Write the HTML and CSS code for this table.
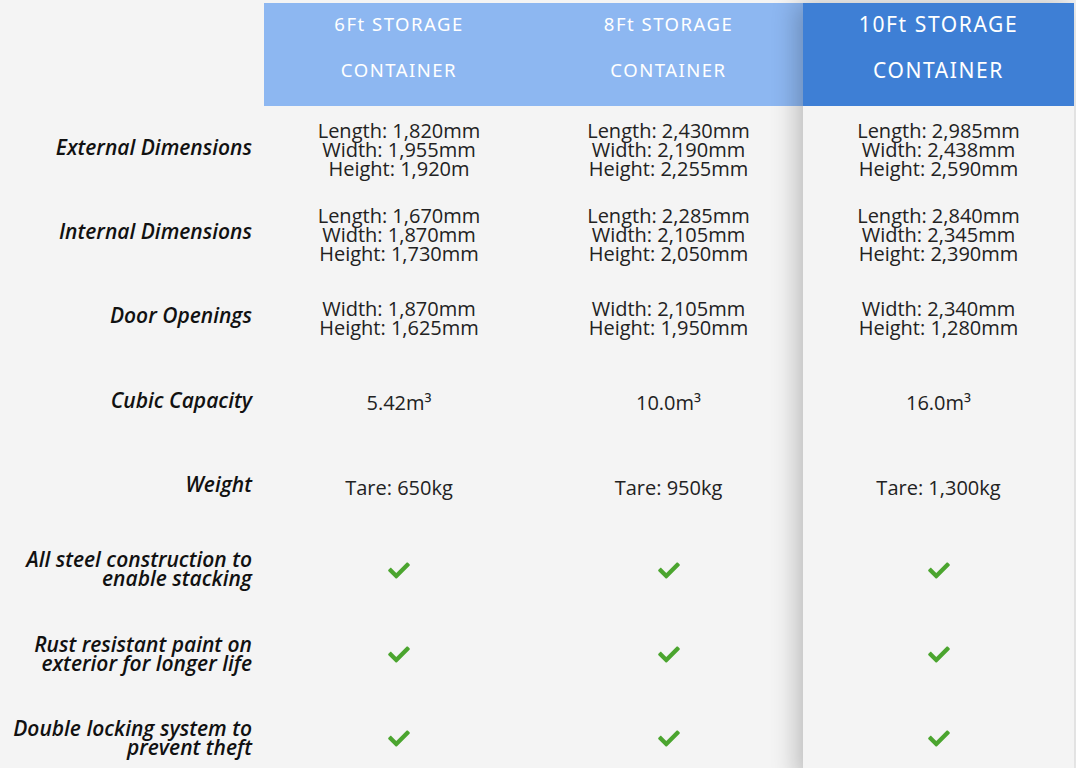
FILE: index.html
```html
<!DOCTYPE html>
<html lang="en">
<head>
<meta charset="utf-8">
<title>Storage Container Comparison</title>
<link rel="stylesheet" href="styles.css">
</head>
<body>
<div class="compare">
  <div class="col labels">
    <div class="head"></div>
    <div class="cell label">External Dimensions</div>
    <div class="cell label">Internal Dimensions</div>
    <div class="cell label">Door Openings</div>
    <div class="cell label">Cubic Capacity</div>
    <div class="cell label">Weight</div>
    <div class="cell label">All steel construction to<br>enable stacking</div>
    <div class="cell label">Rust resistant paint on<br>exterior for longer life</div>
    <div class="cell label">Double locking system to<br>prevent theft</div>
  </div>
  <div class="col plan">
    <div class="head"><p class="head-text">6Ft STORAGE<br>CONTAINER</p></div>
    <div class="cell">Length: 1,820mm<br>Width: 1,955mm<br>Height: 1,920m</div>
    <div class="cell">Length: 1,670mm<br>Width: 1,870mm<br>Height: 1,730mm</div>
    <div class="cell">Width: 1,870mm<br>Height: 1,625mm</div>
    <div class="cell">5.42m³</div>
    <div class="cell">Tare: 650kg</div>
    <div class="cell"><svg class="check" viewBox="0 0 512 400"><path d="M173.9 383.4l-166.4-166.4c-10-10-10-26.2 0-36.2l36.2-36.2c10-10 26.2-10 36.2 0L192 256.7 432.1 16.6c10-10 26.2-10 36.2 0l36.2 36.2c10 10 10 26.2 0 36.2l-294.4 294.4c-10 10-26.2 10-36.2 0z"/></svg></div>
    <div class="cell"><svg class="check" viewBox="0 0 512 400"><path d="M173.9 383.4l-166.4-166.4c-10-10-10-26.2 0-36.2l36.2-36.2c10-10 26.2-10 36.2 0L192 256.7 432.1 16.6c10-10 26.2-10 36.2 0l36.2 36.2c10 10 10 26.2 0 36.2l-294.4 294.4c-10 10-26.2 10-36.2 0z"/></svg></div>
    <div class="cell"><svg class="check" viewBox="0 0 512 400"><path d="M173.9 383.4l-166.4-166.4c-10-10-10-26.2 0-36.2l36.2-36.2c10-10 26.2-10 36.2 0L192 256.7 432.1 16.6c10-10 26.2-10 36.2 0l36.2 36.2c10 10 10 26.2 0 36.2l-294.4 294.4c-10 10-26.2 10-36.2 0z"/></svg></div>
  </div>
  <div class="col plan">
    <div class="head"><p class="head-text">8Ft STORAGE<br>CONTAINER</p></div>
    <div class="cell">Length: 2,430mm<br>Width: 2,190mm<br>Height: 2,255mm</div>
    <div class="cell">Length: 2,285mm<br>Width: 2,105mm<br>Height: 2,050mm</div>
    <div class="cell">Width: 2,105mm<br>Height: 1,950mm</div>
    <div class="cell">10.0m³</div>
    <div class="cell">Tare: 950kg</div>
    <div class="cell"><svg class="check" viewBox="0 0 512 400"><path d="M173.9 383.4l-166.4-166.4c-10-10-10-26.2 0-36.2l36.2-36.2c10-10 26.2-10 36.2 0L192 256.7 432.1 16.6c10-10 26.2-10 36.2 0l36.2 36.2c10 10 10 26.2 0 36.2l-294.4 294.4c-10 10-26.2 10-36.2 0z"/></svg></div>
    <div class="cell"><svg class="check" viewBox="0 0 512 400"><path d="M173.9 383.4l-166.4-166.4c-10-10-10-26.2 0-36.2l36.2-36.2c10-10 26.2-10 36.2 0L192 256.7 432.1 16.6c10-10 26.2-10 36.2 0l36.2 36.2c10 10 10 26.2 0 36.2l-294.4 294.4c-10 10-26.2 10-36.2 0z"/></svg></div>
    <div class="cell"><svg class="check" viewBox="0 0 512 400"><path d="M173.9 383.4l-166.4-166.4c-10-10-10-26.2 0-36.2l36.2-36.2c10-10 26.2-10 36.2 0L192 256.7 432.1 16.6c10-10 26.2-10 36.2 0l36.2 36.2c10 10 10 26.2 0 36.2l-294.4 294.4c-10 10-26.2 10-36.2 0z"/></svg></div>
  </div>
  <div class="col plan featured">
    <div class="head"><p class="head-text">10Ft STORAGE<br>CONTAINER</p></div>
    <div class="cell">Length: 2,985mm<br>Width: 2,438mm<br>Height: 2,590mm</div>
    <div class="cell">Length: 2,840mm<br>Width: 2,345mm<br>Height: 2,390mm</div>
    <div class="cell">Width: 2,340mm<br>Height: 1,280mm</div>
    <div class="cell">16.0m³</div>
    <div class="cell">Tare: 1,300kg</div>
    <div class="cell"><svg class="check" viewBox="0 0 512 400"><path d="M173.9 383.4l-166.4-166.4c-10-10-10-26.2 0-36.2l36.2-36.2c10-10 26.2-10 36.2 0L192 256.7 432.1 16.6c10-10 26.2-10 36.2 0l36.2 36.2c10 10 10 26.2 0 36.2l-294.4 294.4c-10 10-26.2 10-36.2 0z"/></svg></div>
    <div class="cell"><svg class="check" viewBox="0 0 512 400"><path d="M173.9 383.4l-166.4-166.4c-10-10-10-26.2 0-36.2l36.2-36.2c10-10 26.2-10 36.2 0L192 256.7 432.1 16.6c10-10 26.2-10 36.2 0l36.2 36.2c10 10 10 26.2 0 36.2l-294.4 294.4c-10 10-26.2 10-36.2 0z"/></svg></div>
    <div class="cell"><svg class="check" viewBox="0 0 512 400"><path d="M173.9 383.4l-166.4-166.4c-10-10-10-26.2 0-36.2l36.2-36.2c10-10 26.2-10 36.2 0L192 256.7 432.1 16.6c10-10 26.2-10 36.2 0l36.2 36.2c10 10 10 26.2 0 36.2l-294.4 294.4c-10 10-26.2 10-36.2 0z"/></svg></div>
  </div>
</div>
</body>
</html>
```

FILE: styles.css
```css
html, body {
  margin: 0;
  padding: 0;
  background: #f4f4f4;
}

body {
  padding-top: 3px;
  overflow: hidden;
  height: 765px;
  font-family: "Open Sans", "Liberation Sans", sans-serif;
  color: #222;
}

.compare {
  display: flex;
  width: 1074px;
  background: #f4f4f4;
}

.col {
  display: flex;
  flex-direction: column;
}

.labels {
  width: 264px;
}

.plan {
  width: 270px;
  background: #f4f4f4;
}

.plan:nth-child(3) {
  width: 269px;
}

.featured {
  width: 271px;
  position: relative;
  z-index: 1;
  box-shadow: -6px 0 24px rgba(0, 0, 0, 0.24);
}

.head {
  height: 103px;
  text-align: center;
  font-family: "Noto Sans", "DejaVu Sans", sans-serif;
  font-size: 18.5px;
  line-height: 46px;
  letter-spacing: 1.5px;
  color: #fff;
}

.head-text {
  margin: -2px 0 0;
}

.plan .head {
  background: #8db7f1;
}

.featured .head {
  background: #3e7fd5;
  font-size: 21px;
  letter-spacing: 1.6px;
}

.cell {
  height: 84.4px;
  display: flex;
  align-items: center;
  justify-content: center;
  text-align: center;
  font-size: 20px;
  line-height: 19px;
  padding-top: 3px;
  box-sizing: border-box;
}

.label {
  justify-content: flex-end;
  text-align: right;
  padding-right: 12px;
  padding-top: 0;
  padding-bottom: 2px;
  font-style: italic;
  font-weight: 600;
  font-size: 21px;
  line-height: 19px;
  color: #111;
}

.check {
  width: 22px;
  height: 17px;
  fill: #4ba52f;
  margin-top: -3px;
}
```
